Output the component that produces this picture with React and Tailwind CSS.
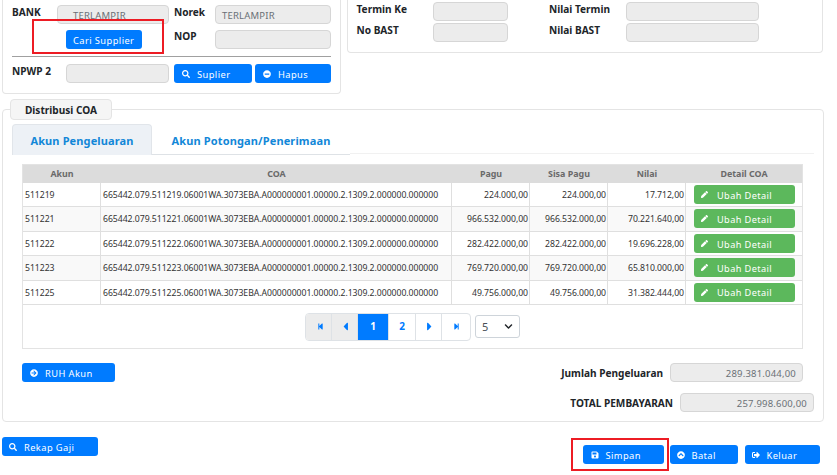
import React, { useState } from 'react';
import {
    FaSearch,
    FaMinusCircle,
    FaArrowCircleRight,
    FaSave,
    FaSignOutAlt,
    FaPen,
    FaStepBackward,
    FaStepForward,
    FaCaretLeft,
    FaCaretRight,
    FaChevronDown,
    FaChevronCircleUp,
} from 'react-icons/fa';

const rows = [
    { akun: '511219', pagu: '224.000,00', sisa: '224.000,00', nilai: '17.712,00' },
    { akun: '511221', pagu: '966.532.000,00', sisa: '966.532.000,00', nilai: '70.221.640,00' },
    { akun: '511222', pagu: '282.422.000,00', sisa: '282.422.000,00', nilai: '19.696.228,00' },
    { akun: '511223', pagu: '769.720.000,00', sisa: '769.720.000,00', nilai: '65.810.000,00' },
    { akun: '511225', pagu: '49.756.000,00', sisa: '49.756.000,00', nilai: '31.382.444,00' },
];

const Label = ({ className = '', children }) => (
    <span className={`whitespace-nowrap text-[10.1px] leading-[14px] font-bold text-[#212529] ${className}`}>{children}</span>
);

const Field = ({ className = '', children }) => (
    <div className={`h-[19px] shrink-0 overflow-hidden rounded border border-[#d6d6d6] bg-[#ececec] text-[9.5px] leading-[20px] tracking-[0.2px] text-[#6a7076] ${className}`}>
        {children}
    </div>
);

const Button = ({ icon: Icon, className = '', children }) => (
    <button className={`flex h-[19px] shrink-0 items-center rounded-[3px] bg-[#007bff] text-left text-[9.3px] tracking-[0.42px] text-white ${className}`}>
        {Icon && <Icon className="mr-[7px] size-2 shrink-0" />}
        <span className="whitespace-nowrap pt-0.5 leading-none">{children}</span>
    </button>
);

const SupplierPanel = () => (
    <div className="relative h-[94px] w-[339px] rounded-b border border-t-0 border-[#e4e4e4] pl-[9px]">
        <div className="flex pt-[5px]">
            <Label className="w-[45px]">BANK</Label>
            <Field className="w-[112px] pl-[15px]">TERLAMPIR</Field>
            <Label className="ml-[5px] w-[41px]">Norek</Label>
            <Field className="w-[116px] pl-[6px]">TERLAMPIR</Field>
        </div>
        <div className="mt-1.5 flex">
            <Button className="ml-[54px] w-[76px] pl-[7px]">Cari Supplier</Button>
            <Label className="ml-8 -mt-px w-[41px]">NOP</Label>
            <Field className="w-[116px]" />
        </div>
        <div className="mt-[7px] h-px w-[319px] bg-[#a0a0a0]" />
        <div className="mt-[7px] flex">
            <Label className="w-[54px]">NPWP 2</Label>
            <Field className="w-[103px]" />
            <Button icon={FaSearch} className="ml-[5px] w-[78px] pl-2">Suplier</Button>
            <Button icon={FaMinusCircle} className="ml-[3px] w-[76px] pl-2">Hapus</Button>
        </div>
        <div className="absolute top-[19px] left-[29px] h-[35px] w-[132px] border-2 border-[#ed1c24]" />
    </div>
);

const TerminPanel = () => (
    <div className="ml-1.5 h-[53px] w-[476px] rounded-b border border-t-0 border-[#e4e4e4] pl-[8.5px]">
        {[['Termin Ke', 'Nilai Termin'], ['No BAST', 'Nilai BAST']].map(([left, right]) => (
            <div key={left} className="flex h-[21px] pt-[2px]">
                <Label className="w-[76.5px]">{left}</Label>
                <Field className="w-[75px]" />
                <Label className="ml-[41px] w-[77px]">{right}</Label>
                <Field className="w-[133px]" />
            </div>
        ))}
    </div>
);

const columns = 'grid grid-cols-[78px_351px_78px_78px_78px_1fr]';

const CoaTable = () => (
    <div className="h-[185px] w-[781px] border border-[#e3e3e3]">
        <div className={`${columns} h-[18px] items-center bg-[#dcdcdc] text-center text-[8.9px] font-bold text-[#6a6a6a]`}>
            <span>Akun</span>
            <span>COA</span>
            <span>Pagu</span>
            <span>Sisa Pagu</span>
            <span>Nilai</span>
            <span>Detail COA</span>
        </div>
        {rows.map((row, index) => (
            <div
                key={row.akun}
                className={`${columns} h-[24.4px] border-b border-[#dfdfdf] text-[8.7px] leading-[24px] tracking-[-0.05px] text-[#333] ${index % 2 ? 'bg-[#f9f9f9]' : 'bg-white'} [&>*]:border-r [&>*]:border-[#dfdfdf] [&>*:last-child]:border-r-0`}
            >
                <span className="pl-0.5">{row.akun}</span>
                <span className="pl-0.5 whitespace-nowrap">
                    665442.079.{row.akun}.06001WA.3073EBA.A000000001.00000.2.1309.2.000000.000000
                </span>
                <span className="pr-px text-right">{row.pagu}</span>
                <span className="pr-px text-right">{row.sisa}</span>
                <span className="pr-px text-right">{row.nilai}</span>
                <div className="flex items-start pt-[2px] pl-2">
                    <button className="flex h-[19px] w-[101px] items-center rounded-[3px] bg-[#5cb85c] pl-[7px] text-[9.2px] tracking-[0.4px] text-white">
                        <FaPen className="size-[7px]" />
                        <span className="ml-[9px] pt-0.5 leading-none">Ubah Detail</span>
                    </button>
                </div>
            </div>
        ))}
        <Paginator />
    </div>
);

const Paginator = () => {
    const [page, setPage] = useState(1);
    const cell = 'flex h-full items-center justify-center border-r border-[#dee2e6] last:border-r-0';
    return (
        <div className="mt-2 ml-[282px] flex items-center">
            <div className="flex h-[28px] w-[166px] overflow-hidden rounded border border-[#dee2e6] text-[10px] font-bold text-[#007bff]">
                <button className={`${cell} w-[26px] bg-[#ececec]`}><FaStepBackward className="ml-1 size-[7px]" /></button>
                <button className={`${cell} w-[26px] bg-[#ececec]`}><FaCaretLeft className="ml-0.5 size-[13px]" /></button>
                {[1, 2].map((n) => (
                    <button
                        key={n}
                        onClick={() => setPage(n)}
                        className={`${cell} ${page === n ? 'w-[31px] bg-[#007bff] text-white' : 'w-[27px]'}`}
                    >
                        {n}
                    </button>
                ))}
                <button className={`${cell} w-[26px]`}><FaCaretRight className="ml-0.5 size-[13px]" /></button>
                <button className={`${cell} w-[28px]`}><FaStepForward className="size-[7px]" /></button>
            </div>
            <div className="ml-1 flex h-[23px] w-[45px] items-center justify-between rounded-[3px] border border-[#ced4da] pr-1.5 pl-1.5 text-[11px] text-[#495057]">
                5
                <FaChevronDown className="size-[9px] text-[#212529]" />
            </div>
        </div>
    );
};

const App = () => (
    <div className="h-[475px] w-[837px] overflow-hidden bg-white pl-[2px] font-['Noto_Sans',sans-serif]">
        <div className="flex items-start">
            <SupplierPanel />
            <TerminPanel />
        </div>

        <div className="mt-[15px] h-[313px] w-[822px] rounded border border-[#e4e4e4] pl-[7px]">
            <div className="-mt-[11px] flex h-[21px] w-[102px] items-center justify-center rounded border border-[#e4e4e4] bg-[#f5f5f5]">
                <Label>Distribusi COA</Label>
            </div>

            <div className="mt-1 ml-[2px] flex h-[31px] text-[11px] font-bold tracking-[0.13px] text-[#1287d8]">
                <div className="flex w-[140px] items-center justify-center rounded-t border border-b-0 border-[#e1e5ea] bg-[#edf1f6] pt-[3px]">
                    <span className="whitespace-nowrap">Akun Pengeluaran</span>
                </div>
                <div className="flex w-[198px] items-center justify-center border-b border-[#dee2e6] pt-1">
                    <span className="whitespace-nowrap">Akun Potongan/Penerimaan</span>
                </div>
                <div className="h-[30px] w-[464px] border-b border-[#f1f1f1]" />
            </div>

            <div className="mt-[9px] ml-3">
                <CoaTable />
                <div className="mt-[14px] flex items-start">
                    <Button icon={FaArrowCircleRight} className="w-[93px] pl-2">RUH Akun</Button>
                    <Label className="ml-auto pt-[3px] pr-[7px]">Jumlah Pengeluaran</Label>
                    <Field className="mr-[20px] w-[133px] pr-1.5 text-right">289.381.044,00</Field>
                </div>
                <div className="mt-[10.5px] flex items-start justify-end">
                    <Label className="pt-[3px] pr-[7px]">TOTAL PEMBAYARAN</Label>
                    <Field className="mr-[9px] w-[134px] pr-1.5 text-right">257.998.600,00</Field>
                </div>
            </div>
        </div>

        <div className="relative mt-[15px] flex items-start">
            <Button icon={FaSearch} className="w-[96px] pl-[7px]">Rekap Gaji</Button>
            <Button icon={FaSave} className="mt-2 ml-[484.5px] w-[81px] pl-2">Simpan</Button>
            <Button icon={FaChevronCircleUp} className="mt-2 ml-1.5 w-[68px] pl-[7px]">Batal</Button>
            <Button icon={FaSignOutAlt} className="mt-2 ml-[7px] w-[75px] pl-[7px]">Keluar</Button>
            <div className="absolute top-px left-[569px] h-[33px] w-[98px] border-2 border-[#ed1c24]" />
        </div>
    </div>
);

export default App;
